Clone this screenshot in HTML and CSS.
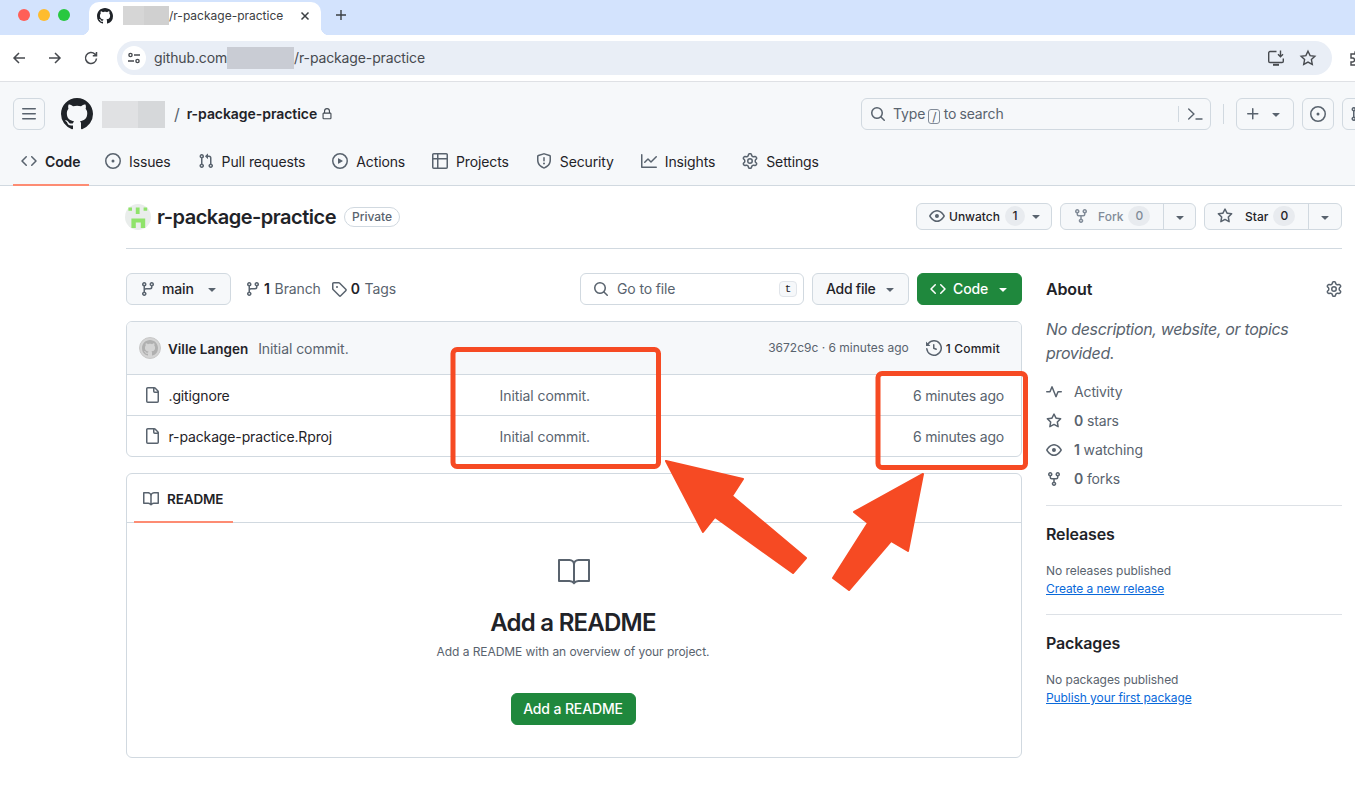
FILE: index.html
```html
<!DOCTYPE html>
<html lang="en">
<head>
  <meta charset="UTF-8" />
  <title>r-package-practice</title>
  <link rel="stylesheet" href="styles.css">
</head>
<body>
  <!-- octicons used more than once -->
  <svg class="sprite" width="0" height="0">
    <symbol id="i-mark" viewBox="0 0 16 16"><path d="M8 0c4.42 0 8 3.58 8 8a8.013 8.013 0 0 1-5.45 7.59c-.4.08-.55-.17-.55-.38 0-.27.01-1.13.01-2.2 0-.75-.25-1.23-.54-1.48 1.78-.2 3.65-.88 3.65-3.95 0-.88-.31-1.59-.82-2.15.08-.2.36-1.02-.08-2.12 0 0-.67-.22-2.2.82-.64-.18-1.32-.27-2-.27-.68 0-1.36.09-2 .27-1.53-1.03-2.2-.82-2.2-.82-.44 1.1-.16 1.92-.08 2.12-.51.56-.82 1.28-.82 2.15 0 3.06 1.86 3.75 3.64 3.95-.23.2-.44.55-.51 1.07-.46.21-1.61.55-2.33-.66-.15-.24-.6-.83-1.23-.82-.67.01-.27.38.01.53.34.19.73.9.82 1.13.16.45.68 1.31 2.69.94 0 .67.01 1.3.01 1.49 0 .21-.15.45-.55.38A7.995 7.995 0 0 1 0 8c0-4.42 3.58-8 8-8Z"/></symbol>
    <symbol id="i-code" viewBox="0 0 16 16"><path d="m11.28 3.22 4.25 4.25a.75.75 0 0 1 0 1.06l-4.25 4.25a.749.749 0 0 1-1.275-.326.749.749 0 0 1 .215-.734L13.94 8l-3.72-3.72a.749.749 0 0 1 .326-1.275.749.749 0 0 1 .734.215Zm-6.56 0a.751.751 0 0 1 1.042.018.751.751 0 0 1 .018 1.042L2.06 8l3.72 3.72a.749.749 0 0 1-.326 1.275.749.749 0 0 1-.734-.215L.47 8.53a.75.75 0 0 1 0-1.06Z"/></symbol>
    <symbol id="i-issue" viewBox="0 0 16 16"><path d="M8 9.5a1.5 1.5 0 1 0 0-3 1.5 1.5 0 0 0 0 3Z"/><path d="M8 0a8 8 0 1 1 0 16A8 8 0 0 1 8 0ZM1.5 8a6.5 6.5 0 1 0 13 0 6.5 6.5 0 0 0-13 0Z"/></symbol>
    <symbol id="i-pr" viewBox="0 0 16 16"><path d="M1.5 3.25a2.25 2.25 0 1 1 3 2.122v5.256a2.251 2.251 0 1 1-1.5 0V5.372A2.25 2.25 0 0 1 1.5 3.25Zm5.677-.177L9.573.677A.25.25 0 0 1 10 .854V2.5h1A2.5 2.5 0 0 1 13.5 5v5.628a2.251 2.251 0 1 1-1.5 0V5a1 1 0 0 0-1-1h-1v1.646a.25.25 0 0 1-.427.177L7.177 3.427a.25.25 0 0 1 0-.354ZM3.750 2.5a.75.75 0 1 0 0 1.5.75.75 0 0 0 0-1.5Zm0 9.5a.75.75 0 1 0 0 1.5.75.75 0 0 0 0-1.5Zm8.25.75a.75.75 0 1 0 1.5 0 .75.75 0 0 0-1.5 0Z"/></symbol>
    <symbol id="i-caret" viewBox="0 0 16 16"><path d="m4.427 7.427 3.396 3.396a.25.25 0 0 0 .354 0l3.396-3.396A.25.25 0 0 0 11.396 7H4.604a.25.25 0 0 0-.177.427Z"/></symbol>
    <symbol id="i-search" viewBox="0 0 16 16"><path d="M10.68 11.74a6 6 0 0 1-7.922-8.982 6 6 0 0 1 8.982 7.922l3.04 3.04a.749.749 0 0 1-.326 1.275.749.749 0 0 1-.734-.215ZM11.5 7a4.499 4.499 0 1 0-8.997 0A4.499 4.499 0 0 0 11.5 7Z"/></symbol>
    <symbol id="i-eye" viewBox="0 0 16 16"><path d="M8 2c1.981 0 3.671.992 4.933 2.078 1.27 1.091 2.187 2.345 2.637 3.023a1.62 1.62 0 0 1 0 1.798c-.45.678-1.367 1.932-2.637 3.023C11.67 13.008 9.981 14 8 14c-1.981 0-3.671-.992-4.933-2.078C1.797 10.83.88 9.576.43 8.898a1.62 1.62 0 0 1 0-1.798c.45-.677 1.367-1.931 2.637-3.022C4.33 2.992 6.019 2 8 2ZM1.679 7.932a.12.12 0 0 0 0 .136c.411.622 1.241 1.75 2.366 2.717C5.176 11.758 6.527 12.5 8 12.5c1.473 0 2.825-.742 3.955-1.715 1.124-.967 1.954-2.096 2.366-2.717a.12.12 0 0 0 0-.136c-.412-.621-1.242-1.75-2.366-2.717C10.824 4.242 9.473 3.5 8 3.5c-1.473 0-2.825.742-3.955 1.715-1.124.967-1.954 2.096-2.366 2.717ZM8 10a2 2 0 1 1-.001-3.999A2 2 0 0 1 8 10Z"/></symbol>
    <symbol id="i-fork" viewBox="0 0 16 16"><path d="M5 5.372v.878c0 .414.336.75.75.75h4.5a.75.75 0 0 0 .75-.75v-.878a2.25 2.25 0 1 1 1.5 0v.878a2.25 2.25 0 0 1-2.25 2.25h-1.5v2.128a2.251 2.251 0 1 1-1.5 0V8.5h-1.5A2.25 2.25 0 0 1 3.5 6.25v-.878a2.25 2.25 0 1 1 1.5 0ZM5 3.25a.75.75 0 1 0-1.5 0 .75.75 0 0 0 1.5 0Zm6.75.75a.75.75 0 1 0 0-1.5.75.75 0 0 0 0 1.5Zm-3 8.75a.75.75 0 1 0-1.5 0 .75.75 0 0 0 1.5 0Z"/></symbol>
    <symbol id="i-star" viewBox="0 0 16 16"><path d="M8 .25a.75.75 0 0 1 .673.418l1.882 3.815 4.21.612a.75.75 0 0 1 .416 1.279l-3.046 2.97.719 4.192a.751.751 0 0 1-1.088.791L8 12.347l-3.766 1.98a.75.75 0 0 1-1.088-.79l.72-4.194L.818 6.374a.75.75 0 0 1 .416-1.28l4.21-.611L7.327.668A.75.75 0 0 1 8 .25Zm0 2.445L6.615 5.5a.75.75 0 0 1-.564.41l-3.097.45 2.24 2.184a.75.75 0 0 1 .216.664l-.528 3.084 2.769-1.456a.75.75 0 0 1 .698 0l2.77 1.456-.53-3.084a.75.75 0 0 1 .216-.664l2.24-2.183-3.096-.45a.75.75 0 0 1-.564-.41L8 2.694Z"/></symbol>
    <symbol id="i-branch" viewBox="0 0 16 16"><path d="M9.5 3.25a2.25 2.25 0 1 1 3 2.122V6A2.5 2.5 0 0 1 10 8.5H6a1 1 0 0 0-1 1v1.128a2.251 2.251 0 1 1-1.5 0V5.372a2.25 2.25 0 1 1 1.5 0v1.836A2.493 2.493 0 0 1 6 7h4a1 1 0 0 0 1-1v-.628A2.25 2.25 0 0 1 9.5 3.25Zm-6 0a.75.75 0 1 0 1.5 0 .75.75 0 0 0-1.5 0Zm8.25-.75a.75.75 0 1 0 0 1.5.75.75 0 0 0 0-1.5ZM4.25 12a.75.75 0 1 0 0 1.5.75.75 0 0 0 0-1.5Z"/></symbol>
    <symbol id="i-file" viewBox="0 0 16 16"><path d="M2 1.75C2 .784 2.784 0 3.75 0h6.586c.464 0 .909.184 1.237.513l2.914 2.914c.329.328.513.773.513 1.237v9.586A1.75 1.75 0 0 1 13.25 16h-9.5A1.75 1.75 0 0 1 2 14.25Zm1.75-.25a.25.25 0 0 0-.25.25v12.5c0 .138.112.25.25.25h9.5a.25.25 0 0 0 .25-.25V6h-2.75A1.75 1.75 0 0 1 9 4.25V1.5Zm6.75.062V4.25c0 .138.112.25.25.25h2.688l-.011-.013-2.914-2.914-.013-.011Z"/></symbol>
    <symbol id="i-book" viewBox="0 0 16 16"><path d="M0 1.75A.75.75 0 0 1 .75 1h4.253c1.227 0 2.317.59 3 1.501A3.743 3.743 0 0 1 11.006 1h4.245a.75.75 0 0 1 .75.75v10.5a.75.75 0 0 1-.75.75h-4.507a2.25 2.25 0 0 0-1.591.659l-.622.621a.75.75 0 0 1-1.06 0l-.622-.621A2.25 2.25 0 0 0 5.258 13H.75a.75.75 0 0 1-.75-.75Zm7.251 10.324.004-5.073-.002-2.253A2.25 2.25 0 0 0 5.003 2.5H1.5v9h3.757a3.75 3.75 0 0 1 1.994.574ZM8.755 4.75l-.004 7.322a3.752 3.752 0 0 1 1.992-.572H14.5v-9h-3.495a2.25 2.25 0 0 0-2.25 2.25Z"/></symbol>
    <symbol id="i-gear" viewBox="0 0 16 16"><path d="M8 0a8.2 8.2 0 0 1 .701.031C9.444.095 9.99.645 10.16 1.29l.288 1.107c.018.066.079.158.212.224.231.114.454.243.668.386.123.082.233.09.299.071l1.103-.303c.644-.176 1.392.021 1.82.63.27.385.506.792.704 1.218.315.675.111 1.422-.364 1.891l-.814.806c-.049.048-.098.147-.088.294.016.257.016.515 0 .772-.01.147.038.246.088.294l.814.806c.475.469.679 1.216.364 1.891a7.977 7.977 0 0 1-.704 1.217c-.428.61-1.176.807-1.82.63l-1.102-.302c-.067-.019-.177-.011-.3.071a5.909 5.909 0 0 1-.668.386c-.133.066-.194.158-.211.224l-.29 1.106c-.168.646-.715 1.196-1.458 1.26a8.006 8.006 0 0 1-1.402 0c-.743-.064-1.289-.614-1.458-1.26l-.289-1.106c-.018-.066-.079-.158-.212-.224a5.738 5.738 0 0 1-.668-.386c-.123-.082-.233-.09-.299-.071l-1.103.303c-.644.176-1.392-.021-1.82-.63a8.12 8.12 0 0 1-.704-1.218c-.315-.675-.111-1.422.363-1.891l.815-.806c.05-.048.098-.147.088-.294a6.214 6.214 0 0 1 0-.772c.01-.147-.038-.246-.088-.294l-.815-.806C.635 6.045.431 5.298.746 4.623a7.92 7.92 0 0 1 .704-1.217c.428-.61 1.176-.807 1.82-.63l1.102.302c.067.019.177.011.3-.071.214-.143.437-.272.668-.386.133-.066.194-.158.211-.224l.29-1.106C6.009.645 6.556.095 7.299.03 7.53.01 7.764 0 8 0Zm-.571 1.525c-.036.003-.108.036-.137.146l-.289 1.105c-.147.561-.549.967-.998 1.189-.173.086-.34.183-.5.29-.417.278-.97.423-1.529.27l-1.103-.303c-.109-.03-.175.016-.195.045-.22.312-.412.644-.573.99-.014.031-.021.11.059.19l.815.806c.411.406.562.957.53 1.456a4.709 4.709 0 0 0 0 .582c.032.499-.119 1.05-.53 1.456l-.815.806c-.081.08-.073.159-.059.19.162.346.353.677.573.989.02.03.085.076.195.046l1.102-.303c.56-.153 1.113-.008 1.53.27.161.107.328.204.501.29.447.222.85.629.997 1.189l.289 1.105c.029.109.101.143.137.146a6.6 6.6 0 0 0 1.142 0c.036-.003.108-.036.137-.146l.289-1.105c.147-.561.549-.967.998-1.189.173-.086.34-.183.5-.29.417-.278.97-.423 1.529-.27l1.103.303c.109.029.175-.016.195-.045.22-.313.411-.644.573-.99.014-.031.021-.11-.059-.19l-.815-.806c-.411-.406-.562-.957-.53-1.456a4.709 4.709 0 0 0 0-.582c-.032-.499.119-1.05.53-1.456l.815-.806c.081-.08.073-.159.059-.19a6.464 6.464 0 0 0-.573-.989c-.02-.03-.085-.076-.195-.046l-1.102.303c-.56.153-1.113.008-1.53-.27a4.44 4.44 0 0 0-.501-.29c-.447-.222-.85-.629-.997-1.189l-.289-1.105c-.029-.11-.101-.143-.137-.146a6.6 6.6 0 0 0-1.142 0ZM11 8a3 3 0 1 1-6 0 3 3 0 0 1 6 0ZM9.5 8a1.5 1.5 0 1 0-3.001.001A1.5 1.5 0 0 0 9.5 8Z"/></symbol>
  </svg>

  <!-- browser chrome -->
  <div class="tabstrip">
    <div class="lights">
      <span class="light red"></span>
      <span class="light yellow"></span>
      <span class="light green"></span>
    </div>
    <div class="tab">
      <svg class="icon tab-favicon"><use href="#i-mark"/></svg>
      <span class="redact-tab"></span>
      <span class="tab-title">/r-package-practice</span>
      <svg class="tab-close" width="10" height="10" viewBox="0 0 10 10"><path d="M1.5 1.5l7 7M8.5 1.5l-7 7"/></svg>
    </div>
    <svg class="tab-new" width="12" height="12" viewBox="0 0 12 12"><path d="M6 1v10M1 6h10"/></svg>
  </div>

  <div class="toolbar">
    <svg class="nav-btn" width="14" height="14" viewBox="0 0 14 14"><path d="M13 7H2M7 2L2 7l5 5"/></svg>
    <svg class="nav-btn" width="14" height="14" viewBox="0 0 14 14"><path d="M1 7h11M7 2l5 5-5 5"/></svg>
    <svg class="nav-btn" width="14" height="14" viewBox="0 0 14 14"><path d="M12.5 7.5a5.5 5.5 0 1 1-1.6-4.4L12.5 4.7M12.5 1v3.7H8.8"/></svg>
    <div class="omnibox">
      <span class="site-info">
        <svg width="14" height="14" viewBox="0 0 14 14"><circle cx="3.5" cy="4" r="1.6"/><path d="M7 4h6M1 10h6"/><circle cx="10.5" cy="10" r="1.6"/></svg>
      </span>
      <span class="url">github.com</span>
      <span class="redact-url"></span>
      <span class="url">/r-package-practice</span>
      <span class="omni-right">
        <svg width="18" height="18" viewBox="0 0 18 18"><path d="M9.5 2.5H3a1.3 1.3 0 0 0-1.3 1.3v8.4A1.3 1.3 0 0 0 3 13.5h12a1.3 1.3 0 0 0 1.3-1.3V9.5M13.5 1.5v6M11 5.2l2.5 2.5L16 5.2"/><path class="thick" d="M6 15.8h6"/></svg>
        <svg width="18" height="18" viewBox="0 0 18 18"><path d="M9 2.2l2.1 4.4 4.8.6-3.5 3.4.9 4.8L9 13.1l-4.3 2.3.9-4.8-3.5-3.4 4.8-.6z"/></svg>
      </span>
    </div>
    <svg class="ext-btn" width="18" height="18" viewBox="0 0 18 18"><path d="M7 3.5a2 2 0 0 1 4 0V5h4v4h-1.5a2 2 0 0 0 0 4H15v3H3v-3h1.5a2 2 0 0 0 0-4H3V5h4z"/></svg>
  </div>

  <!-- github header -->
  <header class="gh-header">
    <div class="gh-top">
      <button class="icon-btn"><svg class="icon" viewBox="0 0 16 16"><path d="M1 2.75A.75.75 0 0 1 1.75 2h12.5a.75.75 0 0 1 0 1.5H1.75A.75.75 0 0 1 1 2.75Zm0 5A.75.75 0 0 1 1.75 7h12.5a.75.75 0 0 1 0 1.5H1.75A.75.75 0 0 1 1 7.75ZM1.75 12h12.5a.75.75 0 0 1 0 1.5H1.75a.75.75 0 0 1 0-1.5Z"/></svg></button>
      <svg class="gh-logo"><use href="#i-mark"/></svg>
      <span class="redact-owner"></span>
      <span class="crumb-sep">/</span>
      <span class="crumb-repo">r-package-practice</span>
      <svg class="icon crumb-lock" viewBox="0 0 16 16"><path d="M4 4a4 4 0 0 1 8 0v2h.25c.966 0 1.75.784 1.75 1.75v5.5A1.75 1.75 0 0 1 12.25 15h-8.5A1.75 1.75 0 0 1 2 13.25v-5.5C2 6.784 2.784 6 3.75 6H4Zm8.25 3.5h-8.5a.25.25 0 0 0-.25.25v5.5c0 .138.112.25.25.25h8.5a.25.25 0 0 0 .25-.25v-5.5a.25.25 0 0 0-.25-.25ZM10.5 6V4a2.5 2.5 0 1 0-5 0v2Z"/></svg>

      <div class="gh-search">
        <svg class="icon"><use href="#i-search"/></svg>
        <span class="search-text">Type <kbd class="slash-key">/</kbd> to search</span>
        <span class="search-div"></span>
        <svg class="icon prompt-icon" viewBox="0 0 16 16"><path d="M1.7 3l5.2 5-5.2 5" fill="none" stroke="currentColor" stroke-width="1.4" stroke-linecap="round"/><path d="M9 13h6" fill="none" stroke="currentColor" stroke-width="1.4" stroke-linecap="round"/></svg>
      </div>
      <span class="top-div"></span>
      <button class="icon-btn plus-btn">
        <svg class="icon" viewBox="0 0 16 16"><path d="M7.75 2a.75.75 0 0 1 .75.75V7h4.25a.75.75 0 0 1 0 1.5H8.5v4.25a.75.75 0 0 1-1.5 0V8.5H2.750a.75.75 0 0 1 0-1.5H7V2.75A.75.75 0 0 1 7.75 2Z"/></svg>
        <svg class="icon"><use href="#i-caret"/></svg>
      </button>
      <button class="icon-btn"><svg class="icon"><use href="#i-issue"/></svg></button>
      <button class="icon-btn"><svg class="icon"><use href="#i-pr"/></svg></button>
    </div>

    <nav class="repo-nav">
      <a class="nav-item active"><svg class="icon"><use href="#i-code"/></svg>Code</a>
      <a class="nav-item"><svg class="icon"><use href="#i-issue"/></svg>Issues</a>
      <a class="nav-item"><svg class="icon"><use href="#i-pr"/></svg>Pull requests</a>
      <a class="nav-item"><svg class="icon" viewBox="0 0 16 16"><path d="M8 0a8 8 0 1 1 0 16A8 8 0 0 1 8 0ZM1.5 8a6.5 6.5 0 1 0 13 0 6.5 6.5 0 0 0-13 0Zm4.879-2.773 4.264 2.559a.25.25 0 0 1 0 .428l-4.264 2.559A.25.25 0 0 1 6 10.559V5.442a.25.25 0 0 1 .379-.215Z"/></svg>Actions</a>
      <a class="nav-item"><svg class="icon" viewBox="0 0 16 16"><path d="M0 1.75C0 .784.784 0 1.75 0h12.5C15.216 0 16 .784 16 1.75v12.5A1.75 1.75 0 0 1 14.25 16H1.75A1.75 1.75 0 0 1 0 14.25ZM6.5 6.5v8h7.75a.25.25 0 0 0 .25-.25V6.5Zm8-1.5V1.75a.25.25 0 0 0-.25-.25H6.5V5Zm-13 1.5v7.75c0 .138.112.25.25.25H5v-8ZM5 5V1.5H1.75a.25.25 0 0 0-.25.25V5Z"/></svg>Projects</a>
      <a class="nav-item"><svg class="icon" viewBox="0 0 16 16"><path d="M7.467.133a1.748 1.748 0 0 1 1.066 0l5.25 1.68A1.75 1.75 0 0 1 15 3.48V7c0 1.566-.32 3.182-1.303 4.682-.983 1.498-2.585 2.813-5.032 3.855a1.697 1.697 0 0 1-1.33 0c-2.447-1.042-4.049-2.357-5.032-3.855C1.32 10.182 1 8.566 1 7V3.48a1.75 1.75 0 0 1 1.217-1.667Zm.61 1.429a.25.25 0 0 0-.153 0l-5.25 1.68a.25.25 0 0 0-.174.238V7c0 1.358.275 2.666 1.057 3.86.784 1.194 2.121 2.34 4.366 3.297a.196.196 0 0 0 .154 0c2.245-.956 3.582-2.104 4.366-3.298C13.225 9.666 13.5 8.36 13.5 7V3.48a.251.251 0 0 0-.174-.237l-5.25-1.68ZM8.75 4.75v3a.75.75 0 0 1-1.5 0v-3a.75.75 0 0 1 1.5 0ZM9 10.5a1 1 0 1 1-2 0 1 1 0 0 1 2 0Z"/></svg>Security</a>
      <a class="nav-item"><svg class="icon" viewBox="0 0 16 16"><path d="M1.5 1.75V13.5h13.75a.75.75 0 0 1 0 1.5H.75a.75.75 0 0 1-.75-.75V1.75a.75.75 0 0 1 1.5 0Zm14.28 2.53-5.25 5.25a.75.75 0 0 1-1.06 0L7 7.06 4.28 9.78a.751.751 0 0 1-1.042-.018.751.751 0 0 1-.018-1.042l3.25-3.25a.75.75 0 0 1 1.06 0L10 7.94l4.72-4.72a.751.751 0 0 1 1.042.018.751.751 0 0 1 .018 1.042Z"/></svg>Insights</a>
      <a class="nav-item"><svg class="icon"><use href="#i-gear"/></svg>Settings</a>
    </nav>
  </header>

  <main class="repo">
    <div class="repo-head">
      <svg class="repo-avatar" width="26" height="26" viewBox="0 0 26 26">
        <circle cx="13" cy="13" r="13" fill="#e9edeb"/>
        <path fill="#8fe36a" d="M3.400 3.400h3.600v3.400H3.400zM10.800 3.400h3.800V10h-3.800zM18.600 3.400h3.600v3.400h-3.600zM6.400 14.600h13.800V24h-4.400v-5.400h-5V24H6.400z"/>
      </svg>
      <h1 class="repo-name">r-package-practice</h1>
      <span class="badge">Private</span>
      <div class="repo-actions">
        <div class="action w-watch">
          <span class="action-main"><svg class="icon"><use href="#i-eye"/></svg><span class="act-label tight">Unwatch</span><span class="count">1</span><svg class="icon caret-s"><use href="#i-caret"/></svg></span>
        </div>
        <div class="action w-fork is-off">
          <span class="action-main w-fork-main"><svg class="icon"><use href="#i-fork"/></svg><span class="act-label">Fork</span><span class="count">0</span></span>
          <span class="action-drop"><svg class="icon"><use href="#i-caret"/></svg></span>
        </div>
        <div class="action w-star">
          <span class="action-main w-star-main"><svg class="icon"><use href="#i-star"/></svg><span class="act-label">Star</span><span class="count">0</span></span>
          <span class="action-drop"><svg class="icon"><use href="#i-caret"/></svg></span>
        </div>
      </div>
    </div>

    <div class="layout">
      <div class="col-main">
        <div class="file-bar">
          <button class="btn branch-btn"><svg class="icon"><use href="#i-branch"/></svg><span>main</span><svg class="icon caret-m"><use href="#i-caret"/></svg></button>
          <span class="meta-link branch-link"><svg class="icon"><use href="#i-branch"/></svg><span><b>1</b> Branch</span></span>
          <span class="meta-link tags-link"><svg class="icon" viewBox="0 0 16 16"><path d="M1 7.775V2.75C1 1.784 1.784 1 2.75 1h5.025c.464 0 .91.184 1.238.513l6.25 6.25a1.75 1.75 0 0 1 0 2.474l-5.026 5.026a1.75 1.75 0 0 1-2.474 0l-6.25-6.25A1.752 1.752 0 0 1 1 7.775Zm1.5 0c0 .066.026.13.073.177l6.25 6.25a.25.25 0 0 0 .354 0l5.025-5.025a.25.25 0 0 0 0-.354l-6.25-6.25a.25.25 0 0 0-.177-.073H2.75a.25.25 0 0 0-.25.25ZM6 5a1 1 0 1 1 0 2 1 1 0 0 1 0-2Z"/></svg><span><b>0</b> Tags</span></span>
          <div class="go-file"><svg class="icon"><use href="#i-search"/></svg><span>Go to file</span><kbd class="t-key">t</kbd></div>
          <button class="btn addfile-btn"><span>Add file</span><svg class="icon caret-m"><use href="#i-caret"/></svg></button>
          <button class="btn code-btn"><svg class="icon"><use href="#i-code"/></svg><span>Code</span><svg class="icon caret-m"><use href="#i-caret"/></svg></button>
        </div>

        <div class="files">
          <div class="commit-row">
            <span class="commit-avatar"><svg width="16" height="16"><use href="#i-mark"/></svg></span>
            <span class="commit-author">Ville Langen</span>
            <span class="commit-msg">Initial commit.</span>
            <span class="commit-hash">3672c9c · 6 minutes ago</span>
            <span class="commit-count"><svg class="icon" viewBox="0 0 16 16"><path d="m.427 1.927 1.215 1.215a8.002 8.002 0 1 1-1.6 5.685.75.75 0 1 1 1.493-.154 6.5 6.5 0 1 0 1.18-4.458l1.358 1.358A.25.25 0 0 1 3.896 6H.25A.25.25 0 0 1 0 5.75V2.104a.25.25 0 0 1 .427-.177ZM7.75 4a.75.75 0 0 1 .75.75v2.992l2.028.812a.75.75 0 0 1-.557 1.392l-2.5-1A.751.751 0 0 1 7 8.25v-3.5A.75.75 0 0 1 7.75 4Z"/></svg>1 Commit</span>
          </div>
          <div class="file-row">
            <svg class="icon"><use href="#i-file"/></svg>
            <span class="file-name">.gitignore</span>
            <span class="file-msg">Initial commit.</span>
            <span class="file-time">6 minutes ago</span>
          </div>
          <div class="file-row">
            <svg class="icon"><use href="#i-file"/></svg>
            <span class="file-name">r-package-practice.Rproj</span>
            <span class="file-msg">Initial commit.</span>
            <span class="file-time">6 minutes ago</span>
          </div>
        </div>

        <section class="readme">
          <div class="readme-tabs">
            <span class="readme-tab"><svg class="icon"><use href="#i-book"/></svg>README</span>
          </div>
          <div class="readme-body">
            <svg class="readme-book" width="32" height="32" viewBox="0 0 32 32"><path d="M1 3h10.500a4.500 4.500 0 0 1 4.500 4.500A4.500 4.500 0 0 1 20.500 3H31v21H20.500c-2 0-3.500.8-4.500 2.300-1-1.500-2.500-2.300-4.500-2.300H1zM16 7.500V26"/></svg>
            <h2 class="readme-title">Add a README</h2>
            <p class="readme-sub">Add a README with an overview of your project.</p>
            <button class="btn add-readme"><span>Add a README</span></button>
          </div>
        </section>
      </div>

      <aside class="col-side">
        <div class="side-head">
          <h3 class="side-title">About</h3>
          <svg class="icon"><use href="#i-gear"/></svg>
        </div>
        <p class="side-desc">No description, website, or topics provided.</p>
        <ul class="side-list">
          <li><svg class="icon" viewBox="0 0 16 16"><path d="M6 2c.306 0 .582.187.696.471L10 10.731l1.304-3.26A.751.751 0 0 1 12 7h3.25a.75.75 0 0 1 0 1.5h-2.742l-1.812 4.528a.751.751 0 0 1-1.392 0L6 4.77 4.696 8.03A.75.75 0 0 1 4 8.5H.75a.75.75 0 0 1 0-1.5h2.742l1.812-4.529A.751.751 0 0 1 6 2Z"/></svg>Activity</li>
          <li><svg class="icon"><use href="#i-star"/></svg><span><b>0</b> stars</span></li>
          <li><svg class="icon"><use href="#i-eye"/></svg><span><b>1</b> watching</span></li>
          <li><svg class="icon"><use href="#i-fork"/></svg><span><b>0</b> forks</span></li>
        </ul>
        <div class="side-block">
          <h3 class="side-title">Releases</h3>
          <p class="side-note">No releases published</p>
          <a class="side-link">Create a new release</a>
        </div>
        <div class="side-block">
          <h3 class="side-title">Packages</h3>
          <p class="side-note">No packages published</p>
          <a class="side-link">Publish your first package</a>
        </div>
      </aside>
    </div>
  </main>

  <!-- red annotations drawn over the screenshot -->
  <svg class="annotations" width="1355" height="801" viewBox="0 0 1355 801">
    <rect x="453" y="349.500" width="205.500" height="117" rx="4"/>
    <rect x="878" y="373.500" width="147.500" height="94" rx="4"/>
    <polygon points="666,461 743,479 732,496 806,558 793,573 715,517 703,532"/>
    <polygon points="923,474 908,551 891,541 849,590 833,578 868,523 854,512"/>
  </svg>
</body>
</html>
```

FILE: styles.css
```css
* {
  box-sizing: border-box;
}

html, body {
  width: 1355px;
  height: 801px;
  overflow: hidden;
}

body {
  margin: 0;
  position: relative;
  background: #fff;
  color: #1f2328;
  font-family: Inter, "Liberation Sans", sans-serif;
  font-size: 14px;
  letter-spacing: -0.13px;
}

h1, h2, h3, p, ul {
  margin: 0;
  padding: 0;
}

button {
  font-family: inherit;
  letter-spacing: inherit;
}

.sprite {
  position: absolute;
}

.icon {
  width: 16px;
  height: 16px;
  flex: none;
  fill: currentColor;
  display: block;
}

/* browser chrome */
.tabstrip {
  height: 35px;
  background: #d3e3fd;
  display: flex;
  align-items: flex-end;
}

.lights {
  display: flex;
  gap: 8px;
  width: 89px;
  padding: 0 0 14px 18px;
}

.light {
  width: 12px;
  height: 12px;
  border-radius: 50%;
}

.red { background: #ff5f57; }
.yellow { background: #febc2e; }
.green { background: #28c840; }

.tab {
  width: 232px;
  height: 33px;
  background: #fff;
  border-radius: 10px 10px 0 0;
  position: relative;
  display: flex;
  align-items: center;
  padding: 0 11px 6px 8px;
  color: #3c4043;
  font-size: 12px;
  letter-spacing: 0;
}

.tab::before, .tab::after {
  content: "";
  position: absolute;
  bottom: 0;
  width: 8px;
  height: 8px;
}

.tab::before {
  left: -8px;
  background: radial-gradient(circle at 0 0, #d3e3fd 8px, #fff 8.5px);
}

.tab::after {
  right: -8px;
  background: radial-gradient(circle at 100% 0, #d3e3fd 8px, #fff 8.5px);
}

.tab-favicon {
  color: #1f2328;
  margin-right: 10px;
}

.redact-tab {
  width: 46px;
  height: 19px;
  flex: none;
  background: linear-gradient(90deg, #d6d6d6 45%, #d0d0d0 45%);
}

.tab-title {
  flex: 1;
}

.tab-close {
  fill: none;
  stroke: #3c4043;
  stroke-width: 1.5;
}

.tab-new {
  fill: none;
  stroke: #3c4043;
  stroke-width: 1.4;
  margin: 0 0 14px 14px;
}

.toolbar {
  height: 47px;
  background: #fff;
  border-bottom: 1px solid #dfe1e5;
  display: flex;
  align-items: center;
  padding: 0 0 1px 12px;
  width: 1400px;
}

.nav-btn {
  fill: none;
  stroke: #474a4f;
  stroke-width: 1.5;
  margin-right: 22px;
  flex: none;
}

.nav-btn:nth-child(3) {
  margin-right: 19px;
}

.omnibox {
  width: 1215px;
  height: 34px;
  background: #e9eef6;
  border-radius: 17px;
  display: flex;
  align-items: center;
  padding-left: 5px;
  flex: none;
  color: #474a4f;
  font-size: 14px;
}

.site-info {
  width: 24px;
  height: 24px;
  border-radius: 50%;
  background: #fff;
  margin-right: 8px;
  display: flex;
  align-items: center;
  justify-content: center;
}

.site-info svg, .omni-right svg, .ext-btn {
  fill: none;
  stroke: #474a4f;
  stroke-width: 1.4;
}

.redact-url {
  width: 67px;
  height: 22px;
  background: #c9ccd4;
}

.omni-right {
  margin-left: auto;
  display: flex;
  gap: 14px;
  padding-right: 15px;
}

.thick {
  stroke-width: 2;
}

.ext-btn {
  margin-left: 16px;
  flex: none;
}

/* github header */
.gh-header {
  height: 104px;
  background: #f6f8fa;
  box-shadow: inset 0 -1px #d1d9e0;
  padding-top: 16px;
}

.gh-top {
  width: 1390px;
  height: 32px;
  display: flex;
  align-items: center;
  padding: 0 16px 0 13px;
}

.icon-btn {
  width: 32px;
  height: 32px;
  flex: none;
  border: 1px solid #d1d9e0;
  border-radius: 6px;
  background: transparent;
  color: #59636e;
  padding: 0;
  display: flex;
  align-items: center;
  justify-content: center;
}

.gh-logo {
  width: 32px;
  height: 32px;
  margin-left: 16px;
  fill: #1f2328;
  flex: none;
}

.redact-owner {
  width: 63px;
  height: 27px;
  margin-left: 9px;
  background: linear-gradient(90deg, #e0e1e3 57%, #d6d8da 57%);
}

.crumb-sep {
  margin-left: 9px;
  color: #59636e;
  font-size: 16px;
}

.crumb-repo {
  margin: 0 0 2px 7px;
  font-weight: 600;
  letter-spacing: -0.06px;
}

.crumb-lock {
  margin-left: 4px;
  width: 12px;
  height: 12px;
  color: #424a53;
}

.gh-search {
  margin-left: auto;
  width: 350px;
  height: 32px;
  border: 1px solid #d1d9e0;
  border-radius: 6px;
  display: flex;
  align-items: center;
  padding: 0 7px 0 8px;
  color: #59636e;
}

.search-text {
  margin-left: 7px;
  flex: 1;
  word-spacing: -0.6px;
}

.slash-key {
  display: inline-block;
  width: 12px;
  height: 15px;
  border: 1px solid #818b98;
  border-radius: 3px;
  font: 12px/13px Inter, sans-serif;
  text-align: center;
  vertical-align: -2px;
}

.search-div {
  width: 1px;
  height: 16px;
  background: #d1d9e0;
  margin-right: 8px;
}

.top-div {
  width: 1px;
  height: 20px;
  background: #d1d9e0;
  margin: 0 12px;
}

.plus-btn {
  width: 58px;
  gap: 7px;
  margin-right: 8px;
  justify-content: flex-start;
  padding-left: 8px;
}

.plus-btn + .icon-btn {
  margin-right: 8px;
}

.repo-nav {
  display: flex;
  gap: 11px;
  margin: 16px 0 0 13px;
}

.nav-item {
  height: 40px;
  padding: 0 8px 8px;
  border-bottom: 2px solid transparent;
  display: flex;
  align-items: center;
  gap: 8px;
  color: #1f2328;
}

.nav-item .icon {
  color: #59636e;
}

.nav-item.active {
  width: 76px;
  font-weight: 600;
  border-bottom-color: #fd8c73;
  margin-right: -3px;
}

/* repo */
.repo {
  padding: 17px 13px 0 126px;
}

.repo-head {
  height: 46px;
  padding-bottom: 18px;
  border-bottom: 1px solid #d1d9e0;
  display: flex;
  align-items: center;
}

.repo-avatar {
  flex: none;
  margin-left: -1px;
}

.repo-name {
  margin-left: 6px;
  font-size: 20px;
  line-height: 26px;
  font-weight: 600;
  letter-spacing: -0.5px;
}

.badge {
  margin-left: 8px;
  height: 20px;
  padding: 0 7px;
  border: 1px solid #d1d9e0;
  border-radius: 10px;
  font-size: 12px;
  line-height: 18px;
  font-weight: 500;
  color: #59636e;
  letter-spacing: 0;
}

.repo-actions {
  margin-left: auto;
  display: flex;
  gap: 8px;
}

.action {
  height: 27px;
  display: flex;
  border: 1px solid #d1d9e0;
  border-radius: 6px;
  background: #f6f8fa;
  font-size: 12px;
  font-weight: 500;
  letter-spacing: 0;
}

.action-main {
  display: flex;
  align-items: center;
  padding: 0 0 1px 12px;
}

.action .icon {
  color: #59636e;
}

.action-drop {
  flex: 1;
  border-left: 1px solid #d1d9e0;
  display: flex;
  align-items: center;
  justify-content: center;
}

.act-label {
  margin-left: 9px;
}

.act-label.tight {
  margin-left: 4px;
}

.count {
  margin-left: 5px;
  min-width: 20px;
  height: 20px;
  padding: 0 6px;
  border-radius: 10px;
  background: #e8ebef;
  text-align: center;
  line-height: 20px;
}

.w-watch { width: 136px; }
.w-fork { width: 136px; }
.w-star { width: 138px; }
.w-fork-main { width: 102px; }
.w-star-main { width: 103px; }

.w-fork .count, .w-star .count {
  min-width: 22px;
}

.w-star .act-label {
  margin-left: 12px;
}

.caret-s {
  margin-left: 3px;
}

.is-off .action-main {
  color: #818b98;
}

.is-off .action-main .icon {
  color: #818b98;
}

.is-off .count {
  color: #818b98;
}

.layout {
  display: flex;
  gap: 24px;
  margin-top: 24px;
}

.col-main {
  width: 896px;
}

.col-side {
  width: 296px;
}

/* file bar */
.file-bar {
  height: 32px;
  display: flex;
  align-items: center;
  margin-bottom: 16px;
}

.btn span, .meta-link span, .go-file span {
  padding-bottom: 2px;
}

.btn {
  height: 32px;
  border: 1px solid #d1d9e0;
  border-radius: 6px;
  background: #f6f8fa;
  color: #1f2328;
  font-size: 14px;
  font-weight: 500;
  display: flex;
  align-items: center;
  padding: 0 12px;
}

.btn .icon {
  color: #59636e;
}

.caret-m {
  margin-left: auto;
}

.branch-btn {
  width: 105px;
  padding-left: 13px;
  gap: 6px;
  padding-right: 10px;
}

.meta-link {
  display: flex;
  align-items: center;
  gap: 3px;
  color: #59636e;
  word-spacing: 1px;
}

.meta-link b {
  color: #1f2328;
  font-weight: 600;
}

.branch-link {
  margin-left: 14px;
}

.tags-link {
  margin-left: 10px;
  gap: 4px;
}

.go-file {
  margin-left: auto;
  width: 224px;
  height: 32px;
  border: 1px solid #d1d9e0;
  border-radius: 6px;
  display: flex;
  align-items: center;
  gap: 8px;
  padding: 0 6px 0 12px;
  color: #59636e;
}

.t-key {
  margin-left: auto;
  width: 18px;
  height: 16px;
  border: 1px solid #e1e5ea;
  border-radius: 4px;
  background: #f6f8fa;
  color: #1f2328;
  font: 11px/14px "Liberation Mono", monospace;
  text-align: center;
}

.addfile-btn {
  width: 97px;
  margin-left: 8px;
  padding: 0 10px 0 13px;
  letter-spacing: -0.25px;
}

.code-btn {
  width: 105px;
  margin-left: 8px;
  background: #1f883d;
  border-color: #1f883d;
  color: #fff;
  gap: 7px;
  padding: 0 10px 0 12px;
}

.code-btn .icon {
  color: #fff;
}

/* files */
.files {
  border: 1px solid #d1d9e0;
  border-radius: 6px;
  overflow: hidden;
}

.commit-row {
  height: 53px;
  background: #f6f8fa;
  border-bottom: 1px solid #d1d9e0;
  display: flex;
  align-items: center;
  padding: 0 21px 0 12px;
}

.commit-avatar {
  width: 22px;
  height: 22px;
  border-radius: 50%;
  background: #d4d4d4;
  border: 1px solid #c8c8c8;
  display: flex;
  align-items: center;
  justify-content: center;
}

.commit-avatar svg {
  fill: #b0b0b0;
}

.commit-author {
  margin: 1px 0 0 7px;
  font-weight: 600;
  font-size: 13.500px;
  letter-spacing: 0;
}

.commit-msg {
  margin-left: 10px;
  color: #59636e;
  letter-spacing: -0.07px;
}

.commit-hash {
  margin-left: auto;
  font-size: 12px;
  color: #59636e;
  letter-spacing: 0;
  padding-bottom: 2px;
}

.commit-count {
  margin-left: 17px;
  display: flex;
  align-items: center;
  gap: 4px;
  font-size: 12px;
  font-weight: 500;
  letter-spacing: 0.2px;
}

.commit-count .icon {
  color: #59636e;
}

.file-row {
  height: 41px;
  border-bottom: 1px solid #d1d9e0;
  display: flex;
  align-items: center;
  padding: 0 17px;
}

.file-row:last-child {
  height: 40px;
  border-bottom: 0;
}

.file-row .icon {
  color: #59636e;
}

.file-name {
  margin-left: 8.500px;
  width: 331px;
}

.file-msg {
  color: #59636e;
  letter-spacing: -0.07px;
}

.file-time {
  margin-left: auto;
  color: #59636e;
  letter-spacing: -0.2px;
}

/* readme */
.readme {
  margin-top: 16px;
  height: 285px;
  border: 1px solid #d1d9e0;
  border-radius: 6px;
}

.readme-tabs {
  height: 49px;
  border-bottom: 1px solid #d1d9e0;
  padding-left: 7px;
}

.readme-tab {
  width: 99px;
  height: 49px;
  border-bottom: 2px solid #fd8c73;
  display: flex;
  align-items: center;
  gap: 8px;
  padding: 3px 0 0 9px;
  font-size: 13.500px;
  font-weight: 600;
}

.readme-tab .icon {
  color: #59636e;
}

.readme-body {
  display: flex;
  flex-direction: column;
  align-items: center;
  padding-top: 34px;
  padding-right: 2px;
}

.readme-book {
  margin-left: 2px;
  fill: none;
  stroke: #59636e;
  stroke-width: 2;
  stroke-linejoin: round;
}

.readme-title {
  margin-top: 19px;
  font-size: 24px;
  line-height: 30px;
  font-weight: 600;
  letter-spacing: -0.75px;
}

.readme-sub {
  margin-top: 5px;
  font-size: 12px;
  line-height: 18px;
  color: #59636e;
  letter-spacing: -0.06px;
}

.add-readme {
  margin-top: 32px;
  width: 125px;
  justify-content: center;
  background: #1f883d;
  border-color: #1f883d;
  color: #fff;
  padding: 0;
}

/* sidebar */
.side-head {
  height: 32px;
  display: flex;
  align-items: center;
  justify-content: space-between;
  color: #59636e;
}

.side-title {
  font-size: 16px;
  line-height: 20px;
  font-weight: 600;
  color: #1f2328;
}

.side-desc {
  margin-top: 12px;
  font-size: 16px;
  line-height: 24px;
  font-style: italic;
  color: #59636e;
  letter-spacing: -0.33px;
}

.side-list {
  list-style: none;
  margin-top: 12px;
  color: #59636e;
}

.side-list li {
  height: 29px;
  display: flex;
  align-items: center;
  gap: 12px;
}

.side-list b {
  font-weight: 600;
}

.side-block {
  border-top: 1px solid #dde1e6;
  margin-top: 12px;
  padding-top: 18px;
}

.side-block + .side-block {
  margin-top: 16px;
}

.side-note {
  margin-top: 18px;
  font-size: 12px;
  line-height: 18px;
  color: #59636e;
  letter-spacing: -0.05px;
}

.side-link {
  display: block;
  font-size: 12px;
  line-height: 18px;
  color: #0969da;
  text-decoration: underline;
  letter-spacing: -0.08px;
}

/* annotations */
.annotations {
  position: absolute;
  top: 0;
  left: 0;
  pointer-events: none;
}

.annotations rect {
  fill: none;
  stroke: #f64a23;
  stroke-width: 5;
}

.annotations polygon {
  fill: #f64a23;
  stroke: #f64a23;
  stroke-width: 2;
  stroke-linejoin: round;
}
```
